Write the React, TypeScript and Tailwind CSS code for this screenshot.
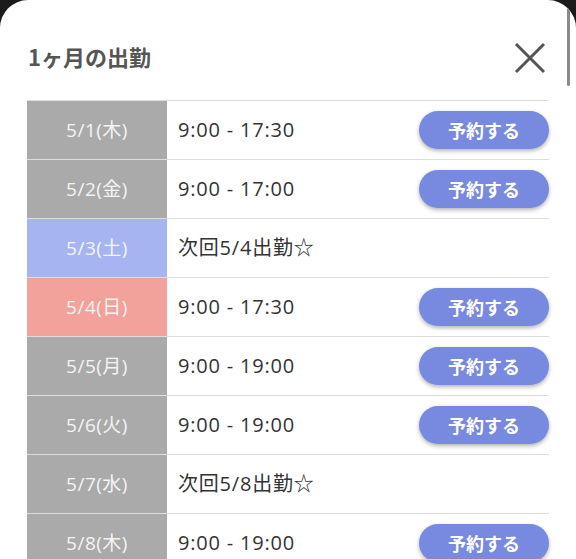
const rows = [
  { date: "5/1(木)", kind: "gray", text: "9:00 - 17:30", book: true },
  { date: "5/2(金)", kind: "gray", text: "9:00 - 17:00", book: true },
  { date: "5/3(土)", kind: "blue", text: "次回5/4出勤☆", book: false },
  { date: "5/4(日)", kind: "red", text: "9:00 - 17:30", book: true },
  { date: "5/5(月)", kind: "gray", text: "9:00 - 19:00", book: true },
  { date: "5/6(火)", kind: "gray", text: "9:00 - 19:00", book: true },
  { date: "5/7(水)", kind: "gray", text: "次回5/8出勤☆", book: false },
  { date: "5/8(木)", kind: "gray", text: "9:00 - 19:00", book: true },
];

const cellColor: Record<string, string> = {
  gray: "bg-[#aaaaaa]",
  blue: "bg-[#a6b5f2]",
  red: "bg-[#f3a29b]",
};

export default function App() {
  return (
    <div
      className="w-[576px] h-[559px] overflow-hidden bg-[#1b1b1b]"
      style={{ fontFamily: '"Open Sans", "Noto Sans CJK JP", sans-serif' }}
    >
      <div className="relative h-full bg-white rounded-t-[28px] overflow-hidden">
        <div className="absolute right-[6px] top-[8px] w-[3px] h-[78px] rounded-full bg-[#8a8a8a]"></div>
        <div className="flex items-center justify-between pt-[38px] pl-[28px] pr-[30px]">
          <h2
            className="text-[22px] leading-[32px] font-semibold text-[#555555]"
            style={{ fontFamily: '"Noto Sans CJK JP", sans-serif' }}
          >
            1ヶ月の出勤
          </h2>
          <button className="w-[32px] h-[32px] mt-[4px] flex items-center justify-center">
            <svg width="32" height="32" viewBox="0 0 32 32">
              <path d="M2 2 L30 30 M30 2 L2 30" stroke="#555555" strokeWidth="3" />
            </svg>
          </button>
        </div>
        <div className="mt-[26px] mx-[27px] border-t border-[#dddddd]">
          {rows.map((r) => (
            <div key={r.date} className="flex h-[59px] border-b border-[#dddddd]">
              <div
                className={`w-[140px] flex items-center justify-center text-[19px] tracking-[0.5px] text-[#f4f4f4] ${cellColor[r.kind]}`}
              >
                {r.date}
              </div>
              <div className="flex-1 flex items-center justify-between pl-[11px]">
                <span className="text-[20px] tracking-[0.8px] text-[#333333]">{r.text}</span>
                {r.book && (
                  <button
                    className="w-[130px] h-[38px] rounded-full bg-[#7889e0] text-white text-[18px] font-semibold shadow-[0_2px_4px_rgba(0,0,0,0.3)]"
                    style={{ fontFamily: '"Noto Sans CJK JP", sans-serif' }}
                  >
                    予約する
                  </button>
                )}
              </div>
            </div>
          ))}
        </div>
      </div>
    </div>
  );
}
